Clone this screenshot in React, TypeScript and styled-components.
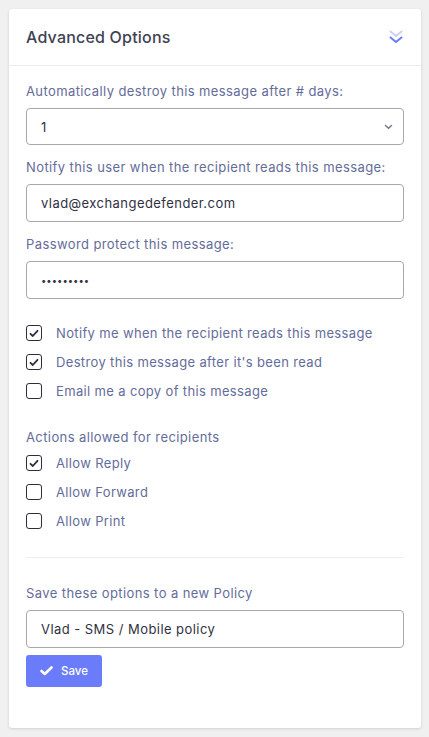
import React from "react";
import styled, { createGlobalStyle } from "styled-components";

const GlobalStyle = createGlobalStyle`
  html, body {
    margin: 0;
    padding: 0;
    background: #f0f0f0;
    font-family: "Inter", "Noto Sans", sans-serif;
  }
`;

const Page = styled.div`
  padding: 9px 8px 9px 9px;
  min-height: 737px;
  box-sizing: border-box;
`;

const Card = styled.div`
  background: #fff;
  border-radius: 3px;
  box-shadow: 0 1px 3px rgba(0, 0, 0, 0.14);
  height: 719px;
  box-sizing: border-box;
`;

const Header = styled.div`
  display: flex;
  align-items: center;
  justify-content: space-between;
  height: 56px;
  padding: 0 17px;
  border-bottom: 1px solid #ebedf2;
`;

const Title = styled.h3`
  margin: 0;
  font-size: 16px;
  font-weight: 500;
  letter-spacing: 0.2px;
  color: #3f4254;
`;

const Body = styled.div`
  padding: 16px 17px;
  display: flex;
  flex-direction: column;
  font-size: 13px;
  letter-spacing: 0.4px;
`;

const Field = styled.div<{ $gap?: number }>`
  display: flex;
  flex-direction: column;
  margin-bottom: ${({ $gap }) => $gap ?? 13}px;
`;

const Label = styled.label`
  color: #646c9a;
  line-height: 18px;
  margin-bottom: 8px;
`;

const Input = styled.input`
  height: 38px;
  box-sizing: border-box;
  border: 1px solid #a8a8a8;
  border-radius: 4px;
  padding: 0 14px;
  font-family: inherit;
  font-size: 13px;
  letter-spacing: 0.45px;
  color: #2f3142;
  outline: none;
  &[type="password"] {
    font-size: 9.5px;
    letter-spacing: 0;
  }
`;

const SelectBox = styled.div`
  height: 37px;
  box-sizing: border-box;
  border: 1px solid #a8a8a8;
  border-radius: 4px;
  padding: 0 10px 0 14px;
  display: flex;
  align-items: center;
  justify-content: space-between;
  color: #2f3142;
`;

const CheckGroup = styled.div<{ $top: number }>`
  display: flex;
  flex-direction: column;
  gap: 13px;
  margin-top: ${({ $top }) => $top}px;
`;

const CheckRow = styled.label`
  display: flex;
  align-items: center;
  gap: 14px;
  color: #646c9a;
  line-height: 16px;
  letter-spacing: 0.35px;
`;

const Box = styled.span`
  width: 16px;
  height: 16px;
  box-sizing: border-box;
  border: 1.5px solid #2c2e3e;
  border-radius: 3px;
  display: flex;
  align-items: center;
  justify-content: center;
  flex-shrink: 0;
`;

const GroupTitle = styled.div`
  color: #646c9a;
  margin-top: 30px;
  margin-bottom: 10px;
  line-height: 16px;
`;

const Divider = styled.hr`
  border: none;
  border-top: 1px solid #ebedf2;
  margin: 28px 0 26px;
`;

const SaveButton = styled.button`
  align-self: flex-start;
  margin-top: -6px;
  height: 32px;
  width: 76px;
  border: none;
  border-radius: 3px;
  background: #6a7cfa;
  color: #fff;
  font-family: inherit;
  font-size: 11.5px;
  font-weight: 500;
  display: flex;
  align-items: center;
  justify-content: center;
  gap: 8px;
`;

const Check = () => (
  <svg width="10" height="9" viewBox="0 0 10 9">
    <path d="M1.5 4.8 L3.8 7 L8.5 1.8" fill="none" stroke="#2c2e3e" strokeWidth="1.8" strokeLinecap="round" strokeLinejoin="round" />
  </svg>
);

const Checkbox = ({ checked, label }: { checked?: boolean; label: string }) => (
  <CheckRow>
    <Box>{checked && <Check />}</Box>
    {label}
  </CheckRow>
);

const DoubleChevron = () => (
  <svg width="16" height="16" viewBox="0 0 16 16">
    <path d="M2.5 2.5 L8 7 L13.5 2.5" fill="none" stroke="#c9cffb" strokeWidth="2" strokeLinecap="round" strokeLinejoin="round" />
    <path d="M2.5 8.5 L8 13 L13.5 8.5" fill="none" stroke="#6a7cfa" strokeWidth="2" strokeLinecap="round" strokeLinejoin="round" />
  </svg>
);

const SmallChevron = () => (
  <svg width="9" height="6" viewBox="0 0 9 6">
    <path d="M1.5 1.5 L4.5 4.3 L7.5 1.5" fill="none" stroke="#74788d" strokeWidth="1.5" strokeLinecap="round" />
  </svg>
);

const App = () => (
  <>
    <GlobalStyle />
    <Page>
      <Card>
        <Header>
          <Title>Advanced Options</Title>
          <DoubleChevron />
        </Header>
        <Body>
          <Field>
            <Label>Automatically destroy this message after # days:</Label>
            <SelectBox>
              <span>1</span>
              <SmallChevron />
            </SelectBox>
          </Field>
          <Field>
            <Label>Notify this user when the recipient reads this message:</Label>
            <Input defaultValue="vlad@exchangedefender.com" />
          </Field>
          <Field $gap={0}>
            <Label>Password protect this message:</Label>
            <Input type="password" defaultValue="123456789" />
          </Field>
          <CheckGroup $top={26}>
            <Checkbox checked label="Notify me when the recipient reads this message" />
            <Checkbox checked label="Destroy this message after it's been read" />
            <Checkbox label="Email me a copy of this message" />
          </CheckGroup>
          <GroupTitle>Actions allowed for recipients</GroupTitle>
          <CheckGroup $top={0}>
            <Checkbox checked label="Allow Reply" />
            <Checkbox label="Allow Forward" />
            <Checkbox label="Allow Print" />
          </CheckGroup>
          <Divider />
          <Field>
            <Label>Save these options to a new Policy</Label>
            <Input defaultValue="Vlad - SMS / Mobile policy" />
          </Field>
          <SaveButton>
            <svg width="13" height="10" viewBox="0 0 13 10">
              <path d="M1.5 5 L4.8 8 L11.5 1.5" fill="none" stroke="#fff" strokeWidth="2.6" strokeLinecap="round" strokeLinejoin="round" />
            </svg>
            Save
          </SaveButton>
        </Body>
      </Card>
    </Page>
  </>
);

export default App;
